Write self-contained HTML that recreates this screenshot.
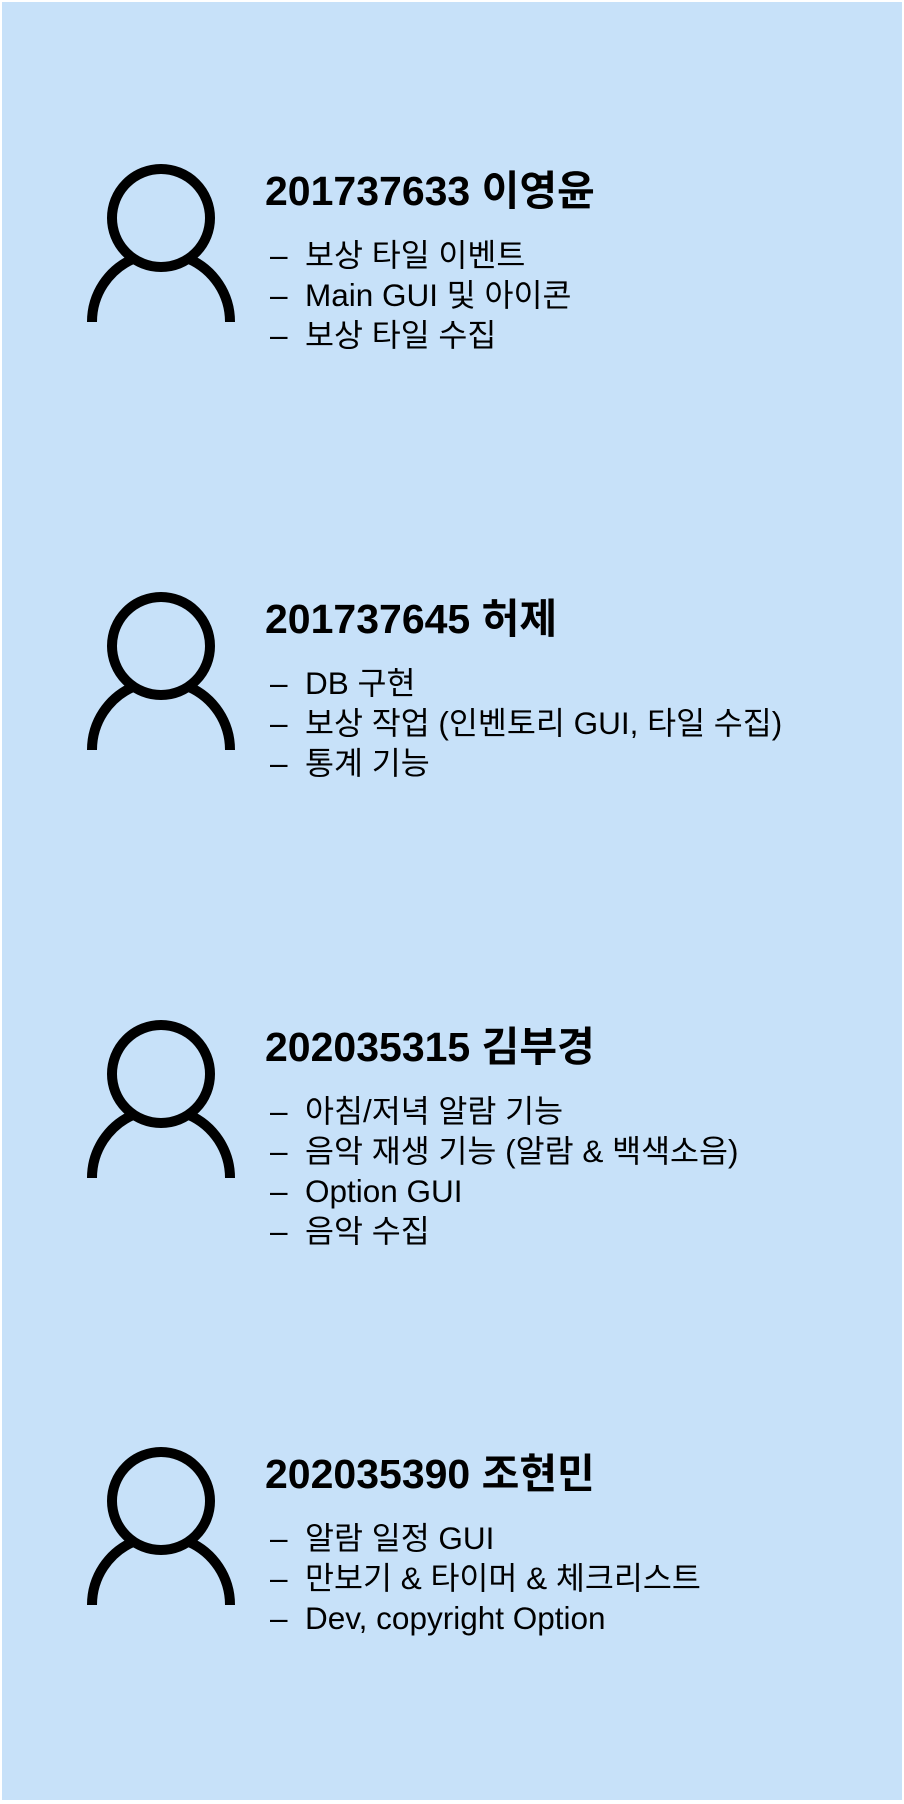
<!DOCTYPE html>
<html><head><meta charset="utf-8"><style>
html,body{margin:0;padding:0;background:#fff;width:904px;height:1804px;overflow:hidden}
.panel{position:absolute;left:2px;top:2px;width:900px;height:1798px;background:#c7e1f9}
.sec{position:absolute;left:0;width:904px;height:300px}
.t{position:absolute;left:265px;top:0;font:bold 41px "Liberation Sans","Noto Sans CJK KR",sans-serif;line-height:44px;color:#000;white-space:nowrap}
ul{position:absolute;left:270px;top:66px;margin:0;padding:0;list-style:none;font:31.5px "Liberation Sans","Noto Sans CJK KR",sans-serif;line-height:40px;color:#000;white-space:nowrap}
li span{display:inline-block;width:35px}
svg{position:absolute;left:0;top:0;overflow:visible}
</style></head><body>
<div class="panel"></div>

<div class="sec" style="top:169px">
<svg width="260" height="160"><circle cx="161" cy="49" r="49" fill="none" stroke="#000" stroke-width="10"/><path d="M92 153 A69 69 0 0 1 133.7 89.6 M188.3 89.6 A69 69 0 0 1 230 153" fill="none" stroke="#000" stroke-width="10"/></svg>
<div class="t">201737633 이영윤</div>
<ul><li><span>&ndash;</span>보상 타일 이벤트</li><li><span>&ndash;</span>Main GUI 및 아이콘</li><li><span>&ndash;</span>보상 타일 수집</li></ul>
</div>

<div class="sec" style="top:597px">
<svg width="260" height="160"><circle cx="161" cy="49" r="49" fill="none" stroke="#000" stroke-width="10"/><path d="M92 153 A69 69 0 0 1 133.7 89.6 M188.3 89.6 A69 69 0 0 1 230 153" fill="none" stroke="#000" stroke-width="10"/></svg>
<div class="t">201737645 허제</div>
<ul><li><span>&ndash;</span>DB 구현</li><li><span>&ndash;</span>보상 작업 (인벤토리 GUI, 타일 수집)</li><li><span>&ndash;</span>통계 기능</li></ul>
</div>

<div class="sec" style="top:1025px">
<svg width="260" height="160"><circle cx="161" cy="49" r="49" fill="none" stroke="#000" stroke-width="10"/><path d="M92 153 A69 69 0 0 1 133.7 89.6 M188.3 89.6 A69 69 0 0 1 230 153" fill="none" stroke="#000" stroke-width="10"/></svg>
<div class="t">202035315 김부경</div>
<ul><li><span>&ndash;</span>아침/저녁 알람 기능</li><li><span>&ndash;</span>음악 재생 기능 (알람 &amp; 백색소음)</li><li><span>&ndash;</span>Option GUI</li><li><span>&ndash;</span>음악 수집</li></ul>
</div>

<div class="sec" style="top:1452px">
<svg width="260" height="160"><circle cx="161" cy="49" r="49" fill="none" stroke="#000" stroke-width="10"/><path d="M92 153 A69 69 0 0 1 133.7 89.6 M188.3 89.6 A69 69 0 0 1 230 153" fill="none" stroke="#000" stroke-width="10"/></svg>
<div class="t">202035390 조현민</div>
<ul><li><span>&ndash;</span>알람 일정 GUI</li><li><span>&ndash;</span>만보기 &amp; 타이머 &amp; 체크리스트</li><li><span>&ndash;</span>Dev, copyright Option</li></ul>
</div>
</body></html>
